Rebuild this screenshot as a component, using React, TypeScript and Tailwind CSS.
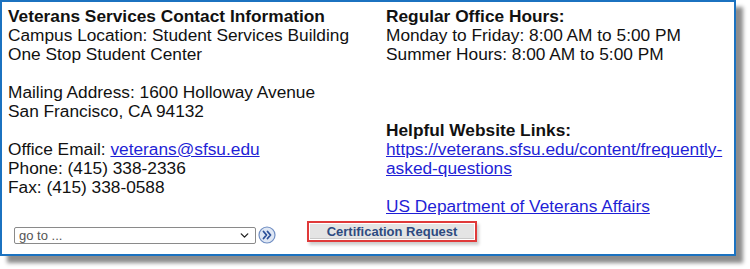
import { ChevronDown } from 'lucide-react'

function GoIcon() {
  return (
    <svg width="18" height="18" viewBox="0 0 18 18">
      <circle cx="9" cy="9" r="8" fill="#dfe7f4" stroke="#6f8dc2" strokeWidth="1.2" />
      <path d="M5.5 5.5 L8.5 9 L5.5 12.5 M9.5 5.5 L12.5 9 L9.5 12.5" fill="none" stroke="#2b4f98" strokeWidth="1.8" strokeLinecap="round" strokeLinejoin="round" />
    </svg>
  )
}

export default function App() {
  return (
    <div className="w-[750px] h-[269px] bg-white font-['Liberation_Sans',Arial,sans-serif]">
      <div className="w-[736px] h-[256px] border-2 border-[#1b72c0] bg-white shadow-[7px_7px_4px_rgba(0,0,0,0.45)] flex flex-col">
        <div className="grid grid-cols-[378px_1fr] pl-[6px] pt-[5px] text-[17.3px] leading-[19px] text-[#111]">
          {/* left column */}
          <div>
            <p className="font-bold">Veterans Services Contact Information</p>
            <p>Campus Location: Student Services Building</p>
            <p className="mb-[19px]">One Stop Student Center</p>
            <p>Mailing Address: 1600 Holloway Avenue</p>
            <p className="mb-[19px]">San Francisco, CA 94132</p>
            <p>
              Office Email:{' '}
              <a href="#" className="text-[#1f1fd6] underline">
                veterans@sfsu.edu
              </a>
            </p>
            <p>Phone: (415) 338-2336</p>
            <p>Fax: (415) 338-0588</p>
          </div>

          {/* right column */}
          <div className="pr-[2px]">
            <p className="font-bold">Regular Office Hours:</p>
            <p>Monday to Friday: 8:00 AM to 5:00 PM</p>
            <p className="mb-[57px]">Summer Hours: 8:00 AM to 5:00 PM</p>
            <p className="font-bold">Helpful Website Links:</p>
            <p className="mb-[19px]">
              <a href="#" className="text-[#1f1fd6] underline">
                https://veterans.sfsu.edu/content/frequently-asked-questions
              </a>
            </p>
            <p>
              <a href="#" className="text-[#1f1fd6] underline">
                US Department of Veterans Affairs
              </a>
            </p>
          </div>
        </div>

        <div className="flex items-start mt-[5px] pl-[12px]">
          <div className="mt-[6px] w-[242px] h-[17px] border border-[#8a8a8a] rounded-[2px] flex items-center justify-between pl-[4px] pr-[4px] text-[13px] text-[#555] bg-white">
            <span>go to ...</span>
            <ChevronDown size={13} strokeWidth={2.5} className="text-[#222]" />
          </div>
          <div className="mt-[5px] ml-[2px]">
            <GoIcon />
          </div>
          <div className="ml-[31px] w-[170px] h-[21px] border-2 border-[#e03a3a] p-[1px] shadow-[2px_3px_3px_rgba(0,0,0,0.2)]">
            <button className="w-full h-full bg-[#e4e4e4] border-b border-[#c8c8c8] text-[13px] leading-[15px] font-bold text-[#2d4a80] flex items-center justify-center">
              Certification Request
            </button>
          </div>
        </div>
      </div>
    </div>
  )
}
